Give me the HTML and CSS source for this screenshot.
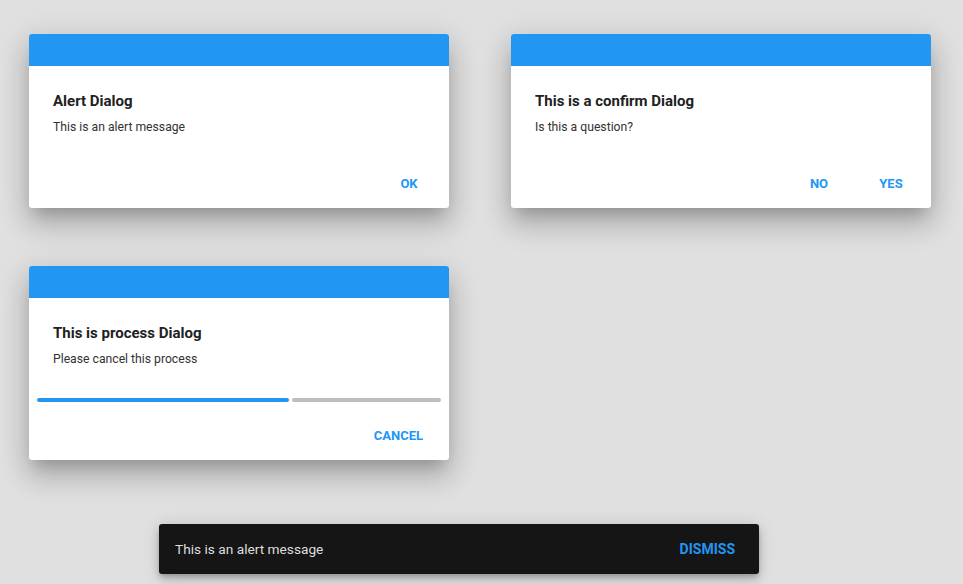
FILE: index.html
```html
<!DOCTYPE html>
<html>
<head>
<meta charset="utf-8">
<link rel="stylesheet" href="styles.css">
</head>
<body>
<div class="page">
  <div class="grid">
    <div class="dialog">
      <div class="dialog-header"></div>
      <div class="dialog-content">
        <div class="dialog-title">Alert Dialog</div>
        <div class="dialog-text">This is an alert message</div>
      </div>
      <div class="dialog-actions">
        <button class="btn">OK</button>
      </div>
    </div>
    <div class="dialog">
      <div class="dialog-header"></div>
      <div class="dialog-content">
        <div class="dialog-title">This is a confirm Dialog</div>
        <div class="dialog-text">Is this a question?</div>
      </div>
      <div class="dialog-actions">
        <button class="btn">NO</button>
        <button class="btn">YES</button>
      </div>
    </div>
    <div class="dialog">
      <div class="dialog-header"></div>
      <div class="dialog-content">
        <div class="dialog-title">This is process Dialog</div>
        <div class="dialog-text">Please cancel this process</div>
      </div>
      <div class="progress">
        <div class="progress-fill" style="width: 252px"></div>
        <div class="progress-rest"></div>
      </div>
      <div class="dialog-actions process-actions">
        <button class="btn">CANCEL</button>
      </div>
    </div>
  </div>
  <div class="snackbar">
    <span class="snackbar-text">This is an alert message</span>
    <button class="snackbar-btn">DISMISS</button>
  </div>
</div>
</body>
</html>
```
FILE: styles.css
```css
html, body {
  margin: 0;
  padding: 0;
  background: #e0e0e0;
  font-family: Roboto, "Liberation Sans", sans-serif;
}
.page {
  width: 963px;
  height: 584px;
  padding: 34px 0 0 29px;
  box-sizing: border-box;
  overflow: hidden;
}
.grid {
  display: grid;
  grid-template-columns: 420px 420px;
  column-gap: 62px;
  row-gap: 58px;
  align-items: start;
}
.dialog {
  background: #fff;
  border-radius: 3px;
  box-shadow: 0 11px 15px -7px rgba(0,0,0,0.2), 0 18px 28px 2px rgba(0,0,0,0.14), 0 6px 30px 5px rgba(0,0,0,0.1);
  overflow: hidden;
}
.dialog-header {
  height: 32px;
  background: #2196f3;
}
.dialog-content {
  padding: 25px 24px 31px;
}
.dialog-title {
  font-size: 15px;
  line-height: 20px;
  font-weight: bold;
  color: #212121;
}
.dialog-text {
  margin-top: 8px;
  font-size: 12.2px;
  line-height: 16px;
  color: #333;
}
.dialog-actions {
  display: flex;
  justify-content: flex-end;
  gap: 8px;
  padding: 0 8px 6px;
}
.process-actions {
  margin-top: 16px;
  padding-right: 18px;
}
.btn {
  min-width: 64px;
  height: 36px;
  padding: 0 8px;
  border: none;
  background: transparent;
  font-family: Roboto, "Liberation Sans", sans-serif;
  font-size: 13px;
  font-weight: bold;
  color: #2196f3;
  line-height: 36px;
}
.progress {
  display: flex;
  gap: 3px;
  padding: 0 8px;
  height: 4px;
}
.progress-fill {
  height: 4px;
  background: #2196f3;
  border-radius: 2px;
}
.progress-rest {
  flex: 1;
  height: 4px;
  background: #bdbdbd;
  border-radius: 2px;
}
.snackbar {
  margin: 64px 0 0 130px;
  width: 600px;
  height: 50px;
  box-sizing: border-box;
  background: #151515;
  border-radius: 3px;
  box-shadow: 0 3px 5px -1px rgba(0,0,0,0.2), 0 6px 10px 0 rgba(0,0,0,0.14), 0 1px 18px 0 rgba(0,0,0,0.12);
  display: flex;
  align-items: center;
  justify-content: space-between;
  padding: 0 24px 0 16px;
}
.snackbar-text {
  font-size: 13.7px;
  color: #dedede;
}
.snackbar-btn {
  border: none;
  background: transparent;
  padding: 0;
  font-family: Roboto, "Liberation Sans", sans-serif;
  font-size: 14px;
  font-weight: bold;
  color: #2196f3;
}
```
